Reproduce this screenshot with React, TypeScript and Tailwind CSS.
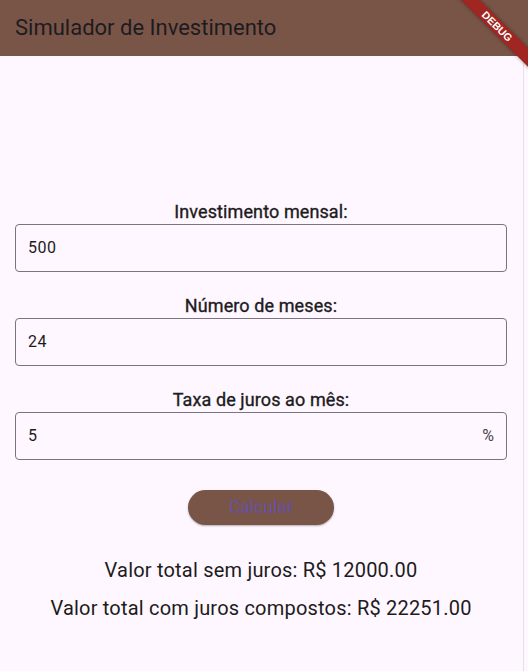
import React from "react";

const font = { fontFamily: "Roboto, 'Noto Sans', sans-serif" };

function Field({ label, value, suffix }: { label: string; value: string; suffix?: string }) {
  return (
    <div className="flex flex-col items-stretch">
      <div className="text-center text-[18px] leading-[22px] font-normal tracking-[0.1px] text-[#1d1b20] [-webkit-text-stroke:0.35px_#1d1b20]">{label}</div>
      <div className="mt-[1px] h-[48px] rounded-[4px] border border-[#79747e] flex items-center pl-[12px] pr-[12px]">
        <span className="flex-1 text-[16px] text-[#1d1b20] tracking-[0.5px]">{value}</span>
        {suffix && <span className="text-[16px] text-[#49454f]">{suffix}</span>}
      </div>
    </div>
  );
}

export default function App() {
  return (
    <div className="relative w-[528px] h-[671px] bg-[#fef7ff] overflow-hidden flex flex-col" style={font}>
      <header className="h-[56px] bg-[#795548] flex items-center pl-[15px] shrink-0">
        <h1 className="text-[22px] text-[#1d1b20] leading-none">Simulador de Investimento</h1>
      </header>
      <div className="flex flex-1">
        <main className="flex-1 pl-[15px] pr-[16px] pt-[145px] flex flex-col">
          <div className="flex flex-col gap-[23px]">
            <Field label="Investimento mensal:" value="500" />
            <Field label="Número de meses:" value="24" />
            <Field label="Taxa de juros ao mês:" value="5" suffix="%" />
          </div>
          <div className="flex justify-center mt-[30px]">
            <button className="w-[146px] h-[35px] rounded-full bg-[#795548] text-[#6750a4] text-[17.5px] leading-none shadow-[0_1px_2px_rgba(0,0,0,0.3)]">
              Calcular
            </button>
          </div>
          <div className="mt-[31px] flex flex-col items-center gap-[10px] text-[20px] leading-[28px] tracking-[0.2px] text-[#1d1b20]">
            <div>Valor total sem juros: R$ 12000.00</div>
            <div>Valor total com juros compostos: R$ 22251.00</div>
          </div>
        </main>
        <div className="w-[5px] border-l border-[#e6e0e9] bg-[#fcf8fd] shrink-0" />
      </div>
      <div className="absolute top-0 right-0 w-[90px] h-[80px] overflow-hidden pointer-events-none">
        <div
          className="absolute left-[-6px] top-[20px] w-[130px] h-[13px] rotate-45 bg-[#a12520] flex items-center justify-center text-white text-[10.5px] font-bold leading-none shadow-[0_0_4px_rgba(0,0,0,0.4)]"
          style={{ fontFamily: "'Liberation Sans', Arial, sans-serif" }}
        >
          DEBUG
        </div>
      </div>
    </div>
  );
}
